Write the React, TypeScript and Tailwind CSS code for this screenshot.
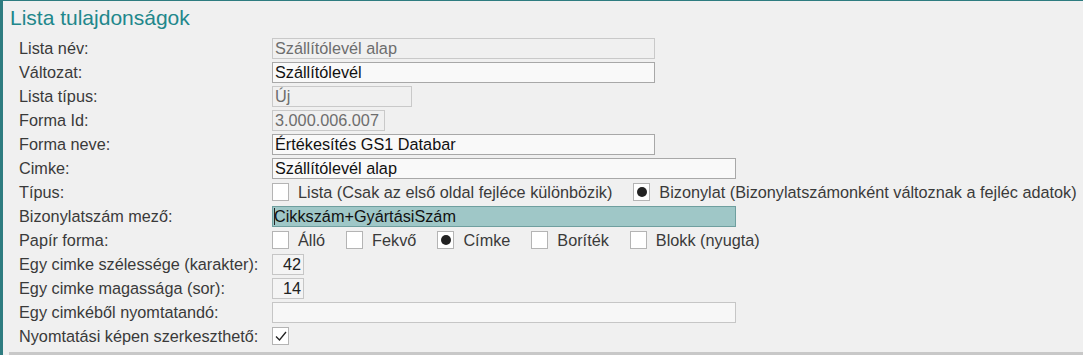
import type { ReactNode } from "react";

type Row = { label: string; field: ReactNode };

function Box({ children, className }: { children?: ReactNode; className: string }) {
  return <div className={`h-[21px] border px-[2px] leading-[19px] whitespace-nowrap overflow-hidden ${className}`}>{children}</div>;
}

function Check({ dot, tick }: { dot?: boolean; tick?: boolean }) {
  return (
    <span className="mt-[1px] flex h-[18px] w-[17px] shrink-0 items-center justify-center border border-[#b4b4b4] bg-white">
      {dot && <span className="h-[10px] w-[10px] rounded-full bg-[#222]" />}
      {tick && (
        <svg width="14" height="14" viewBox="0 0 14 14">
          <polyline points="2,7.5 5.5,11 12,3" fill="none" stroke="#222" strokeWidth="1.3" />
        </svg>
      )}
    </span>
  );
}

function Option({ label, dot }: { label: string; dot?: boolean }) {
  return (
    <div className="flex items-start gap-[9px]">
      <Check dot={dot} />
      <span className="leading-[21px]">{label}</span>
    </div>
  );
}

const disabled = "border-[#c9c9c9] bg-[#f0f0f0] text-[#6d6d6d]";
const editable = "border-[#a8a8a8] bg-[#f9f9f9] text-[#111]";

const rows: Row[] = [
  { label: "Lista név:", field: <Box className={`w-[383px] ${disabled}`}>Szállítólevél alap</Box> },
  { label: "Változat:", field: <Box className={`w-[383px] ${editable}`}>Szállítólevél</Box> },
  { label: "Lista típus:", field: <Box className={`w-[140px] ${disabled}`}>Új</Box> },
  { label: "Forma Id:", field: <Box className={`w-[113px] ${disabled}`}>3.000.006.007</Box> },
  { label: "Forma neve:", field: <Box className={`w-[383px] ${editable}`}>Értékesítés GS1 Databar</Box> },
  { label: "Cimke:", field: <Box className={`w-[464px] ${editable}`}>Szállítólevél alap</Box> },
  {
    label: "Típus:",
    field: (
      <div className="flex gap-[21px]">
        <Option label="Lista (Csak az első oldal fejléce különbözik)" />
        <Option label="Bizonylat (Bizonylatszámonként változnak a fejléc adatok)" dot />
      </div>
    ),
  },
  {
    label: "Bizonylatszám mező:",
    field: (
      <div className="relative h-[21px] w-[464px] border border-[#6f9f9f] bg-[#9fc7c7] pl-[1px] leading-[19px] text-[#111]">
        <span className="absolute left-[1px] top-[1px] h-[17px] w-[1px] bg-[#222]" />
        Cikkszám+GyártásiSzám
      </div>
    ),
  },
  {
    label: "Papír forma:",
    field: (
      <div className="flex gap-[21px]">
        <Option label="Álló" />
        <Option label="Fekvő" />
        <Option label="Címke" dot />
        <Option label="Boríték" />
        <Option label="Blokk (nyugta)" />
      </div>
    ),
  },
  {
    label: "Egy cimke szélessége (karakter):",
    field: <Box className="w-[32px] border-[#c6c6c6] bg-[#f4f4f4] text-right text-[#222]">42</Box>,
  },
  {
    label: "Egy cimke magassága (sor):",
    field: <Box className="w-[32px] border-[#c6c6c6] bg-[#f4f4f4] text-right text-[#222]">14</Box>,
  },
  { label: "Egy cimkéből nyomtatandó:", field: <Box className="w-[464px] border-[#c6c6c6] bg-[#f7f7f7]" /> },
  { label: "Nyomtatási képen szerkeszthető:", field: <Check tick /> },
];

export default function App() {
  return (
    <div
      className="h-[355px] w-[1083px] overflow-hidden border-l-[3px] border-t border-[#2e7c80] bg-[#f0f0f0] text-[16.25px] text-[#3a3a3a]"
      style={{ fontFamily: '"Liberation Sans", Arial, sans-serif' }}
    >
      <div className="h-[37px] pl-[7px] pt-[4px] text-[21px] leading-[26px] text-[#21878b]">Lista tulajdonságok</div>
      <div className="pl-[16px]">
        {rows.map((row) => (
          <div key={row.label} className="grid h-[24px] grid-cols-[253px_1fr] items-start">
            <span className="leading-[21px]">{row.label}</span>
            {row.field}
          </div>
        ))}
      </div>
      <div className="ml-[6px] mt-[2px] h-[3px] bg-[#c8c8c8]" />
    </div>
  );
}
